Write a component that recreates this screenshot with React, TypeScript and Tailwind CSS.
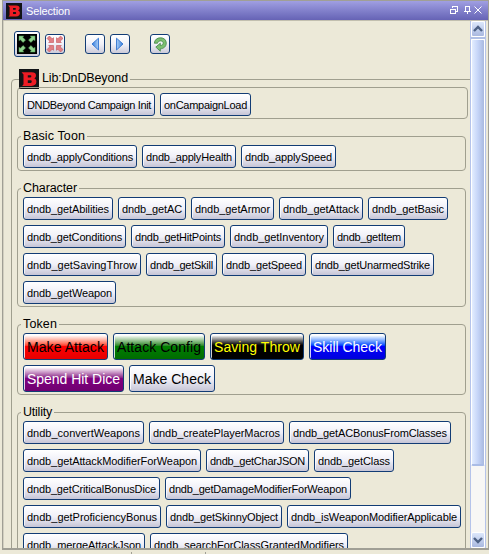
import { useLayoutEffect, useRef, useState } from "react";
import type { ReactNode } from "react";
import { clsx } from "clsx";

/* Text tracked so that it fills an exact width. */
function Fit({ text, width }: { text: string; width: number }) {
  const ref = useRef<HTMLSpanElement>(null);
  const [spacing, setSpacing] = useState(0);
  useLayoutEffect(() => {
    if (!ref.current) return;
    const natural = ref.current.getBoundingClientRect().width;
    setSpacing((s) => s + (width - natural) / text.length);
  }, [text, width]);
  return (
    <span ref={ref} className="inline-block whitespace-nowrap" style={{ letterSpacing: spacing }}>
      {text}
    </span>
  );
}

type Macro = [label: string, width: number, look?: string];

function MacroButton({ macro, big }: { macro: Macro; big?: boolean }) {
  const [label, width, look] = macro;
  return (
    <button
      style={{ width }}
      className={clsx(
        "flex shrink-0 items-center justify-start rounded-[3px] border border-[#123c75] pl-[3px] whitespace-nowrap",
        big
          ? "h-[27px] pt-px text-[14px] leading-[16px] shadow-[inset_1px_1px_0_#ffffffd0]"
          : "h-[23px] pt-[2px] text-[11px] leading-[13px] shadow-[inset_1px_1px_0_#ffffffb0]",
        look ?? "bg-linear-to-b from-white via-[#f0f0f8] to-[#c6c5d6] text-black",
      )}
    >
      <Fit text={label} width={width - 8} />
    </button>
  );
}

function Rows({ rows, big }: { rows: Macro[][]; big?: boolean }) {
  return (
    <div className="flex flex-col gap-[5px]">
      {rows.map((row, i) => (
        <div key={i} className="flex gap-[5px]">
          {row.map((m) => (
            <MacroButton key={m[0]} macro={m} big={big} />
          ))}
        </div>
      ))}
    </div>
  );
}

function Group(props: { title: string; titleWidth: number; height: string; rows: Macro[][]; big?: boolean }) {
  return (
    <fieldset className={clsx("w-[449px] rounded-[4px] border border-[#a09f8f] pt-px pl-[5px]", props.height)}>
      <legend className="-ml-[2px] h-[15px] px-[2px] text-[12.5px] leading-[15px] text-black">
        <Fit text={props.title} width={props.titleWidth} />
      </legend>
      <Rows rows={props.rows} big={props.big} />
    </fieldset>
  );
}

function BeyondLogo({ className }: { className: string }) {
  return (
    <svg viewBox="0 0 20 20" className={className}>
      <rect width="20" height="20" fill="#111316" />
      <path
        d="M2.5 3.2h10.2c3 0 4.300 1.200 4.300 3.200 0 1.500-.7 2.400-1.900 2.900 1.500.6 2.300 1.700 2.300 3.300 0 2.900-1.800 4.300-5 4.300H3.200l1.300-1.600V5.400zM8.800 6.200v2.200h2.600c1.300 0 1.300-2.200 0-2.200zM8.800 11.200v2.700h2.900c1.400 0 1.400-2.700 0-2.700z"
        fill="#ed1c24"
        fillRule="evenodd"
      />
    </svg>
  );
}

const corner = "M0 0h4.800L3.700 1.300l2.800 2.800-2.400 2.400-2.800-2.800L0 4.800z";

function ExpandIcon() {
  return (
    <svg viewBox="0 0 20 20" className="size-5 bg-black" fill="#8dd38b" stroke="#4c9a55" strokeWidth=".5">
      <path transform="translate(2 2)" d={corner} />
      <path transform="translate(18 2) scale(-1 1)" d={corner} />
      <path transform="translate(2 18) scale(1 -1)" d={corner} />
      <path transform="translate(18 18) scale(-1 -1)" d={corner} />
    </svg>
  );
}

function CollapseIcon() {
  return (
    <svg viewBox="0 0 18 18" className="size-[18px]" fill="#e08085" stroke="#c4545b" strokeWidth=".6">
      <path transform="translate(7.500 7.500) scale(-1)" d={corner} />
      <path transform="translate(10.500 7.500) scale(1 -1)" d={corner} />
      <path transform="translate(7.500 10.500) scale(-1 1)" d={corner} />
      <path transform="translate(10.500 10.500)" d={corner} />
    </svg>
  );
}

function ToolButton({ className, children }: { className?: string; children: ReactNode }) {
  return (
    <button
      className={clsx(
        "flex size-5 shrink-0 items-center justify-center rounded-[3px] border border-[#123c75] bg-linear-to-b from-white via-[#f1f1f8] to-[#cccbd9]",
        className,
      )}
    >
      {children}
    </button>
  );
}

function Arrow({ flip }: { flip?: boolean }) {
  return (
    <svg viewBox="0 0 18 18" className="size-[18px]">
      <defs>
        <linearGradient id="arrow" x1="0" x2="1">
          <stop offset="0" stopColor="#a9cdf6" />
          <stop offset="1" stopColor="#347ddd" />
        </linearGradient>
      </defs>
      <path
        transform={flip ? "translate(18 0) scale(-1 1)" : undefined}
        d="M5.500 3.200 12 9l-6.500 6z"
        fill="url(#arrow)"
        stroke="#3274cf"
        strokeWidth=".9"
        strokeLinejoin="round"
      />
    </svg>
  );
}

function RefreshIcon() {
  return (
    <svg viewBox="0 0 18 18" className="size-[18px]">
      <path
        d="M3.300 8.200C3.700 4.600 6.300 2.800 9.500 2.800c3.500 0 5.800 2.200 5.800 5.300 0 3.300-2.400 5.500-6 5.700v2.400l-4.500-4.100 4.500-3.900v2.300c1.900-.1 2.900-1 2.900-2.400 0-1.300-1-2.200-2.700-2.200-1.500 0-2.500.8-2.900 2.300z"
        fill="#7dc072"
        stroke="#418745"
        strokeWidth=".8"
        strokeLinejoin="round"
      />
    </svg>
  );
}

function ScrollButton({ down }: { down?: boolean }) {
  return (
    <div className="flex h-4 shrink-0 items-center justify-center rounded-[2px] border border-white bg-linear-to-b from-[#dce7fb] to-[#a9b8df]">
      <svg viewBox="0 0 12 12" className={clsx("size-3", down && "rotate-180")} fill="none" stroke="#4d6185" strokeWidth="2.4">
        <path d="m2 8 4-4 4 4" />
      </svg>
    </div>
  );
}

const lib: Macro[][] = [[["DNDBeyond Campaign Init", 132], ["onCampaignLoad", 91]]];
const toon: Macro[][] = [[["dndb_applyConditions", 114], ["dndb_applyHealth", 94], ["dndb_applySpeed", 95]]];
const character: Macro[][] = [
  [["dndb_getAbilities", 90], ["dndb_getAC", 68], ["dndb_getArmor", 83], ["dndb_getAttack", 84], ["dndb_getBasic", 80]],
  [["dndb_getConditions", 103], ["dndb_getHitPoints", 94], ["dndb_getInventory", 98], ["dndb_getItem", 72]],
  [["dndb_getSavingThrow", 118], ["dndb_getSkill", 71], ["dndb_getSpeed", 84], ["dndb_getUnarmedStrike", 123]],
  [["dndb_getWeapon", 93]],
];
const token: Macro[][] = [
  [
    ["Make Attack", 85, "bg-linear-to-b from-white from-5% via-[#ff0000] via-50% to-[#e60000] text-black"],
    ["Attack Config", 92, "bg-linear-to-b from-white from-5% via-[#008000] via-50% to-[#006b00] text-black"],
    ["Saving Throw", 94, "bg-linear-to-b from-white from-5% via-black via-50% to-black text-[#ffff00]"],
    ["Skill Check", 77, "bg-linear-to-b from-white from-5% via-[#0000ff] via-50% to-[#0000dc] text-white"],
  ],
  [
    ["Spend Hit Dice", 101, "bg-linear-to-b from-white from-5% via-[#800080] via-50% to-[#700070] text-white"],
    ["Make Check", 86],
  ],
];
const utility: Macro[][] = [
  [["dndb_convertWeapons", 121], ["dndb_createPlayerMacros", 135], ["dndb_getACBonusFromClasses", 162]],
  [["dndb_getAttackModifierForWeapon", 178], ["dndb_getCharJSON", 103], ["dndb_getClass", 80]],
  [["dndb_getCriticalBonusDice", 137], ["dndb_getDamageModifierForWeapon", 186]],
  [["dndb_getProficiencyBonus", 138], ["dndb_getSkinnyObject", 116], ["dndb_isWeaponModifierApplicable", 174]],
  [["dndb_mergeAttackJson", 122], ["dndb_searchForClassGrantedModifiers", 198]],
];

export default function App() {
  return (
    <div className="h-[554px] w-[489px] overflow-hidden bg-[#ece9d8] pl-[2px] font-['Liberation_Sans',Arial,sans-serif]">
      <div className="flex h-[550px] w-[487px] flex-col border border-b-2 border-[#a09f95]">
        <header className="flex h-[19px] shrink-0 items-center bg-linear-to-b from-[#a09fe2] to-[#6663b5] pr-[6px] pl-[3px] text-white">
          <BeyondLogo className="size-4" />
          <span className="ml-[4px] grow text-[11px] leading-[16px]">
            <Fit text="Selection" width={44} />
          </span>
          <svg viewBox="0 0 32 9" className="-mt-px h-[9px] w-8" fill="none" stroke="white" shapeRendering="crispEdges">
            <path d="M.5 3.500h5v4h-5zM0 3.500h6M2.500 2V.5h5v5H6" />
            <path d="M15.500 5V.5h4V5M14 5.500h7M17.500 5v3" />
            <path d="m24.500.5 7 7m0-7-7 7" shapeRendering="auto" />
          </svg>
        </header>
        <div className="flex min-h-0 grow border-t border-[#c2bfaf]">
          <main className="w-[467px] shrink-0 overflow-hidden border-l border-[#d2cfc0] pl-[7px]">
            <div className="flex h-[48px] items-start pt-[10px] pl-[3px]">
              <button className="flex size-[26px] shrink-0 items-center justify-center rounded-[3px] border border-[#123c75] bg-linear-to-b from-white to-[#cdcddd]">
                <ExpandIcon />
              </button>
              <ToolButton className="mt-[3px] ml-[5px]">
                <CollapseIcon />
              </ToolButton>
              <ToolButton className="mt-[3px] ml-[20px]">
                <Arrow flip />
              </ToolButton>
              <ToolButton className="mt-[3px] ml-[5px]">
                <Arrow />
              </ToolButton>
              <ToolButton className="mt-[3px] ml-[20px]">
                <RefreshIcon />
              </ToolButton>
            </div>
            <fieldset className="h-[600px] w-[500px] rounded-[4px] border border-[#a09f8f] pl-[5px]">
              <legend className="ml-[2px] flex h-[21px] items-start gap-[3px] pr-[2px] text-[12.5px] leading-[19px] text-black">
                <BeyondLogo className="size-5" />
                <Fit text="Lib:DnDBeyond" width={86} />
              </legend>
              <div className="-mt-[3px] flex flex-col gap-[10px]">
                <section className="h-[32px] w-[451px] rounded-[4px] border border-[#a09f8f] pt-[5px] pl-[5px]">
                  <Rows rows={lib} />
                </section>
                <Group title="Basic Toon" titleWidth={62} height="h-[42px]" rows={toon} />
                <Group title="Character" titleWidth={54} height="h-[126px]" rows={character} />
                <Group title="Token" titleWidth={34} height="h-[78px]" rows={token} big />
                <Group title="Utility" titleWidth={29} height="h-[200px]" rows={utility} />
              </div>
            </fieldset>
          </main>
          <div className="flex w-[16px] shrink-0 flex-col border-x border-[#b5c3ea] bg-[#f8f7f5]">
            <ScrollButton />
            <div className="h-[2px] shrink-0 bg-[#b0c0e5]" />
            <div className="h-[427px] shrink-0 rounded-[2px] border border-b-2 border-white border-b-[#aabce6] bg-linear-to-r from-[#e3edff] via-[#c5d4f7] to-[#a9b9df]" />
            <div className="grow" />
            <ScrollButton down />
          </div>
        </div>
      </div>
      <div className="flex h-[4px] items-end pl-[129px]">
        <div className="h-[2px] w-px bg-[#a09f95]" />
        <div className="ml-[73px] h-[2px] w-px bg-[#a09f95]" />
      </div>
    </div>
  );
}
